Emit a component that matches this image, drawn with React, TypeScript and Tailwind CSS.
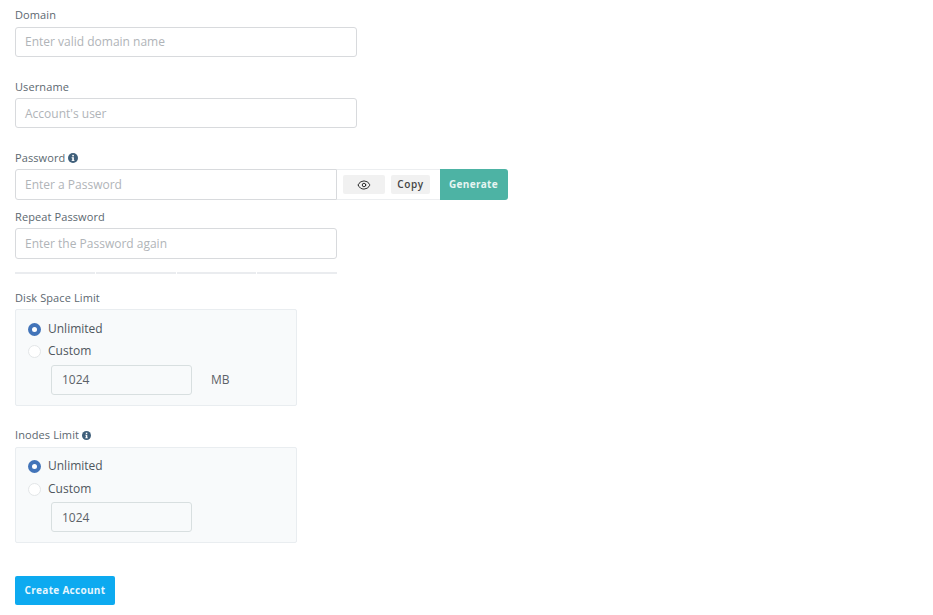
import { Eye } from 'lucide-react';

const font = { fontFamily: '"Open Sans", sans-serif' };

const InfoIcon = ({ size }: { size: number }) => (
    <svg width={size} height={size} viewBox="0 0 16 16" className="shrink-0">
        <circle cx="8" cy="8" r="8" fill="#3f5f7a" />
        <rect x="6.8" y="3" width="2.6" height="2.4" fill="#fff" />
        <path d="M5.8 6.8h3.6v4.6h1v1.4H5.8v-1.4h1V8.2h-1z" fill="#fff" />
    </svg>
);

const Label = ({ children, className }: { children: React.ReactNode; className: string }) => (
    <div className={`flex h-4 items-center gap-[3px] text-[11px] tracking-[0.1px] text-[#5c6870] ${className}`}>
        {children}
    </div>
);

const TextBox = ({ placeholder, className }: { placeholder: string; className: string }) => (
    <div className={`flex items-center rounded-[3px] border border-[#d8dadd] bg-white pl-[9px] text-[12px] text-[#b0b4b8] ${className}`}>
        {placeholder}
    </div>
);

const Radio = ({ checked, label }: { checked?: boolean; label: string }) => (
    <div className="flex h-4 items-center gap-[7px] text-[12px] text-[#4f575e]">
        {checked ? (
            <span className="flex h-[13px] w-[13px] items-center justify-center rounded-full bg-[#4274b9]">
                <span className="h-[5px] w-[5px] rounded-full bg-white" />
            </span>
        ) : (
            <span className="h-[13px] w-[13px] rounded-full border border-[#e3e6e8] bg-white" />
        )}
        {label}
    </div>
);

const LimitBox = ({ unit, inputClass, customGap, className }: { unit?: string; inputClass: string; customGap: string; className: string }) => (
    <div className={`w-[282px] rounded-[2px] border border-[#e9edf0] bg-[#f8fafb] pl-[12px] ${className}`}>
        <Radio checked label="Unlimited" />
        <div className={customGap}>
            <Radio label="Custom" />
        </div>
        <div className={`ml-[23px] flex items-center ${inputClass}`}>
            <div className="flex h-[30px] w-[141px] items-center rounded-[3px] border border-[#d8dfe0] bg-[#f8fafb] pl-[10px] text-[12px] text-[#5c6268]">
                1024
            </div>
            {unit && <span className="ml-[19px] text-[12px] text-[#5c6268]">{unit}</span>}
        </div>
    </div>
);

export default function App() {
    return (
        <div className="min-h-[615px] w-[933px] bg-white pt-[7px] pl-[15px]" style={font}>
            <Label className="">Domain</Label>
            <TextBox placeholder="Enter valid domain name" className="mt-[4px] h-[30px] w-[342px]" />

            <Label className="mt-[22px]">Username</Label>
            <TextBox placeholder="Account's user" className="mt-[3px] h-[30px] w-[342px] pt-[1px]" />

            <Label className="mt-[22px]">
                Password <InfoIcon size={10} />
            </Label>
            <div className="mt-[3px] flex h-[31px] w-[493px]">
                <TextBox placeholder="Enter a Password" className="h-full w-[322px] rounded-r-none" />
                <div className="flex h-full w-[103px] items-center border-y border-[#eceef0] bg-white pl-[6px]">
                    <button className="flex h-[19px] w-[42px] items-center justify-center rounded-[2px] bg-[#f1f1f1] text-[#222]">
                        <Eye size={14} strokeWidth={1.6} />
                    </button>
                    <button className="ml-[6px] flex h-[19px] w-[39px] items-center justify-center rounded-[2px] bg-[#f1f1f1] text-[10px] font-semibold tracking-[0.6px] text-[#444]">
                        Copy
                    </button>
                </div>
                <button className="flex h-full w-[68px] items-center justify-center rounded-r-[3px] bg-[#4db3a4] pr-[1px] text-[10px] font-bold tracking-[0.3px] text-[#e6f5f2]">
                    Generate
                </button>
            </div>

            <Label className="mt-[9px]">Repeat Password</Label>
            <TextBox placeholder="Enter the Password again" className="mt-[3px] h-[31px] w-[322px]" />

            <div className="mt-[13px] grid h-[2px] w-[322px] grid-cols-4 gap-px">
                <div className="bg-[#eaecef]" />
                <div className="bg-[#eaecef]" />
                <div className="bg-[#eaecef]" />
                <div className="bg-[#eaecef]" />
            </div>

            <Label className="mt-[16px]">Disk Space Limit</Label>
            <LimitBox unit="MB" customGap="mt-[6px]" inputClass="mt-[6px]" className="mt-[3px] h-[97px] pt-[11px]" />

            <Label className="mt-[21px]">
                Inodes Limit <InfoIcon size={9} />
            </Label>
            <LimitBox customGap="mt-[7px]" inputClass="mt-[5px] [&>div]:pt-[1px]" className="mt-[4px] h-[96px] pt-[10px]" />

            <button className="mt-[33px] flex h-[29px] w-[100px] items-center justify-center rounded-[2px] bg-[#0daaf0] text-[10px] font-bold tracking-[0.3px] text-[#e6f6fe]">
                Create Account
            </button>
        </div>
    );
}
